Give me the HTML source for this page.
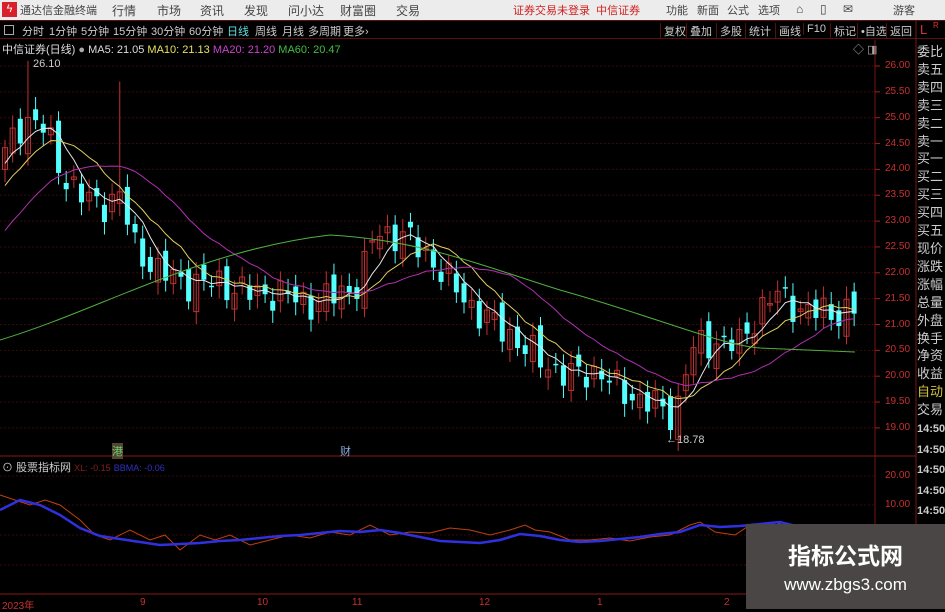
<!DOCTYPE html>
<html><head><meta charset="utf-8">
<style>
*{margin:0;padding:0;box-sizing:border-box}
body{width:945px;height:609px;background:#000;overflow:hidden;position:relative;font-family:"Liberation Sans","Noto Sans CJK SC",sans-serif;font-size:11px}
.top{position:absolute;left:0;top:0;width:945px;height:20px;background:#ececec;color:#444;font-size:12px}
.top span{position:absolute;top:2px}
.tb{position:absolute;left:0;top:20px;width:945px;height:19px;background:#000;border-top:1px solid #5a1010;border-bottom:1px solid #5a1010;color:#ccc;font-size:11px}
.tb span{position:absolute;top:2px}
.btn{border-left:1px solid #5a1010;padding:0 3px;}
.rp{position:absolute;left:917px;top:43px;width:28px;color:#ccc;font-size:13px;line-height:17.9px;white-space:nowrap}
.ax{position:absolute;color:#c83030;font-size:10px;left:885px}
</style></head><body>
<div class="top">
<div style="position:absolute;left:2px;top:2px;width:15px;height:15px;background:#d8202a;color:#fff;font-size:11px;text-align:center;line-height:15px">ϟ</div>
<span style="left:20px;font-size:11px">通达信金融终端</span>
<span style="left:112px">行情</span><span style="left:157px">市场</span><span style="left:200px">资讯</span><span style="left:244px">发现</span><span style="left:288px">问小达</span><span style="left:340px">财富圈</span><span style="left:396px">交易</span>
<span style="left:513px;color:#d02020;font-size:11px">证券交易未登录&nbsp; 中信证券</span>
<span style="left:666px;font-size:11px">功能</span><span style="left:697px;font-size:11px">新面</span><span style="left:727px;font-size:11px">公式</span><span style="left:758px;font-size:11px">选项</span>
<span style="left:796px">⌂</span><span style="left:820px">▯</span><span style="left:843px">✉</span><span style="left:893px;font-size:11px">游客</span>
</div>
<div class="tb">
<span style="left:4px;border:1px solid #aaa;width:10px;height:10px;top:4px"></span>
<span style="left:22px">分时</span><span style="left:49px">1分钟</span><span style="left:81px">5分钟</span><span style="left:113px">15分钟</span><span style="left:151px">30分钟</span><span style="left:189px">60分钟</span><span style="left:227px;color:#5fe0e0">日线</span><span style="left:255px">周线</span><span style="left:282px">月线</span><span style="left:308px">多周期</span><span style="left:343px">更多›</span>
<span class="btn" style="left:660px">复权</span><span class="btn" style="left:686px">叠加</span><span class="btn" style="left:716px">多股</span><span class="btn" style="left:745px">统计</span><span class="btn" style="left:775px">画线</span><span class="btn" style="left:803px">F10</span><span class="btn" style="left:830px">标记</span><span class="btn" style="left:857px">•自选</span><span class="btn" style="left:886px">返回</span>
<span style="left:920px;color:#e03030;font-size:13px;top:1px">L</span><span style="left:933px;color:#e03030;font-size:8px;top:0">R</span>
</div>
<div style="position:absolute;left:2px;top:41px;color:#ddd;font-size:11px;white-space:nowrap">中信证券(日线) <span style="color:#aaa">●</span> MA5: 21.05 <span style="color:#e8e060">MA10: 21.13</span> <span style="color:#d040d0">MA20: 21.20</span> <span style="color:#40c040">MA60: 20.47</span></div>
<div style="position:absolute;left:853px;top:41px;color:#aaa;font-size:11px">◇ ◨</div>
<svg width="945" height="609" style="position:absolute;left:0;top:0" id="s"></svg>
<div class="rp">委比<br>卖五<br>卖四<br>卖三<br>卖二<br>卖一<br>买一<br>买二<br>买三<br>买四<br>买五<br>现价<br>涨跌<br>涨幅<br>总量<br>外盘<br>换手<br>净资<br>收益<br><span style="color:#d0c040">自动</span><br>交易<br><b style="font-size:11px;line-height:19.5px">14:50<br>14:50<br>14:50<br>14:50<br>14:50<br>14:50<br>14:50<br>14:50<br>14:50</b></div>
<div id="ax"></div>
<div style="position:absolute;left:2px;top:459px;color:#ccc;font-size:11px">⊙ 股票指标网 <span style="color:#802020;font-size:9px">XL: -0.15</span> <span style="color:#3030c0;font-size:9px">BBMA: -0.06</span></div>
<div style="position:absolute;left:112px;top:443px;color:#6c6;font-size:11px;background:#543">港</div>
<div style="position:absolute;left:340px;top:443px;color:#8ad;font-size:11px">财</div>
<div style="position:absolute;left:33px;top:58px;color:#ccc;font-size:11px">26.10</div>
<div style="position:absolute;left:666px;top:434px;color:#ccc;font-size:11px">←18.78</div>
<div style="position:absolute;top:597px;left:2px;color:#c83030;font-size:10px">2023年</div>
<div style="position:absolute;top:597px;left:140px;color:#c83030;font-size:10px">9</div>
<div style="position:absolute;top:597px;left:257px;color:#c83030;font-size:10px">10</div>
<div style="position:absolute;top:597px;left:352px;color:#c83030;font-size:10px">11</div>
<div style="position:absolute;top:597px;left:479px;color:#c83030;font-size:10px">12</div>
<div style="position:absolute;top:597px;left:597px;color:#c83030;font-size:10px">1</div>
<div style="position:absolute;top:597px;left:724px;color:#c83030;font-size:10px">2</div>
<div style="position:absolute;left:746px;top:524px;width:199px;height:85px;background:#4a4646;color:#fff;text-align:center">
<div style="font-size:23px;font-weight:bold;margin-top:18px;line-height:28px">指标公式网</div>
<div style="font-size:17px;margin-top:5px">www.zbgs3.com</div></div>
<script>
var s=document.getElementById('s'),h='';
function Y(p){return 66+(26-p)*51.7}
h+='<line x1="875" y1="40" x2="875" y2="609" stroke="#7a1515"/><line x1="916" y1="20" x2="916" y2="609" stroke="#7a1515"/>';
h+='<line x1="0" y1="456" x2="916" y2="456" stroke="#8a1818"/><line x1="0" y1="594" x2="916" y2="594" stroke="#8a1818"/>';
var ax='';
for(var p=19;p<=26;p+=0.5){var y=Y(p);h+='<line x1="0" y1="'+y+'" x2="875" y2="'+y+'" stroke="#3a0808" stroke-dasharray="2,2"/><line x1="875" y1="'+y+'" x2="880" y2="'+y+'" stroke="#a02020"/>';ax+='<div class="ax" style="top:'+(y-6)+'px">'+p.toFixed(2)+'</div>';}
[[476,'20.00'],[505,'10.00'],[535,'0.00']].forEach(function(a){h+='<line x1="0" y1="'+a[0]+'" x2="875" y2="'+a[0]+'" stroke="#3a0808" stroke-dasharray="2,2"/>';ax+='<div class="ax" style="top:'+(a[0]-6)+'px;left:'+(a[1]=='0.00'?893:885)+'px">'+a[1]+'</div>';});
h+='<line x1="0" y1="565" x2="875" y2="565" stroke="#3a0808" stroke-dasharray="2,2"/>';
document.getElementById('ax').innerHTML=ax;
var K=[[5,24.3],[25,25.0],[45,24.8],[60,24.0],[80,23.5],[100,23.3],[120,23.5],[135,22.5],[160,22.0],[190,21.8],[220,21.8],[250,21.6],[280,21.6],[310,21.4],[340,21.6],[360,21.8],[375,22.8],[405,22.7],[430,22.3],[450,21.8],[480,21.2],[510,20.8],[540,20.3],[570,20.0],[600,20.1],[620,19.7],[650,19.5],[675,19.2],[690,20.5],[720,20.7],[740,20.6],[760,21.3],[775,21.6],[800,21.3],[830,21.2],[855,21.3]];
function interp(x){for(var i=1;i<K.length;i++)if(x<=K[i][0]){var a=K[i-1],b=K[i];return a[1]+(b[1]-a[1])*(x-a[0])/(b[0]-a[0]);}return K[K.length-1][1];}
var C=[],X=[];for(var i=0;i<20;i++)C.push(21.0+3.3*i/19);
var prev=24.0;
for(var i=0;i<112;i++){var x=5+i*7.65;if(x>858)break;X.push(x);var c=interp(x)+0.25*Math.sin(i*2.3)+0.12*Math.cos(i*5.1);var o=prev+0.2*Math.sin(i*3.7);var hi=Math.max(o,c)+0.15+0.1*Math.abs(Math.sin(i*1.3)),lo=Math.min(o,c)-0.15-0.1*Math.abs(Math.cos(i*1.9));
if(i==3)hi=26.1;if(i==15)hi=25.7;var col2=c>=o?'#c03030':'#54ffff';
h+='<line x1="'+x+'" y1="'+Y(hi)+'" x2="'+x+'" y2="'+Y(lo)+'" stroke="'+col2+'"/>';
var t=Y(Math.max(o,c)),bh=Math.max(1.5,Math.abs(Y(o)-Y(c)));
h+=c>=o?'<rect x="'+(x-2.5)+'" y="'+t+'" width="5" height="'+bh+'" fill="none" stroke="#c03030"/>':'<rect x="'+(x-2.5)+'" y="'+t+'" width="5" height="'+bh+'" fill="#54ffff"/>';
C.push(c);prev=c;}
function ma(n,col){var d='';for(var j=0;j<X.length;j++){var k=j+20,sm=0;for(var q=0;q<n;q++)sm+=C[k-q];d+=(j?'L':'M')+X[j]+' '+Y(sm/n).toFixed(1);}h+='<path d="'+d+'" fill="none" stroke="'+col+'" stroke-width="1"/>';}
ma(5,'#e8e8e8');ma(10,'#e0d060');ma(20,'#b030b0');
h+='<path d="M0 340 C100 310 200 250 330 235 C420 240 480 265 560 290 C650 315 720 345 760 348 L855 352" fill="none" stroke="#50b040"/>';
var r='M0 495 L15 500 L30 505 L45 500 L60 505 L80 520 L95 535 L110 540 L130 530 L150 540 L165 535 L180 550 L200 535 L215 540 L230 535 L250 545 L270 540 L290 535 L310 538 L330 532 L350 535 L370 525 L390 535 L410 532 L430 533 L450 528 L470 530 L490 535 L510 530 L525 525 L535 530 L550 532 L570 540 L590 540 L610 538 L630 541 L650 537 L670 535 L690 525 L700 522 L715 532 L735 535 L750 525 L765 533 L775 522 L790 528 L810 532 L830 537 L845 530 L855 533';
var b='M0 510 L20 500 L40 505 L60 515 L80 528 L100 536 L120 539 L140 542 L160 545 L180 544 L200 543 L220 541 L240 540 L260 538 L280 536 L300 535 L320 533 L340 531 L360 532 L380 530 L400 533 L420 537 L440 541 L460 542 L480 543 L500 540 L520 534 L540 536 L560 540 L580 542 L600 541 L620 539 L640 537 L660 534 L680 532 L700 525 L720 527 L740 526 L760 524 L780 522 L800 527 L820 532 L840 535 L855 535';
h+='<path d="'+r+'" fill="none" stroke="#c04010" stroke-width="1"/><path d="'+b+'" fill="none" stroke="#3030e0" stroke-width="2.5"/>';
s.innerHTML=h;
</script>
</body></html>
